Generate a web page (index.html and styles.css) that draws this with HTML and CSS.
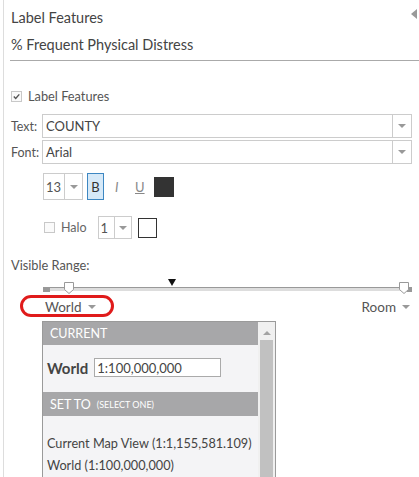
FILE: index.html
```html
<!DOCTYPE html>
<html>
<head>
<meta charset="utf-8">
<link rel="stylesheet" href="styles.css">
</head>
<body>
<div class="wrap">
  <div class="pane">
    <svg class="collapse" width="6" height="10" viewBox="0 0 6 10"><path d="M6 0 L0 5 L6 10 Z" fill="#9a9a9a"/></svg>
    <div class="header">
      <div class="title">Label Features</div>
      <div class="subtitle">% Frequent Physical Distress</div>
    </div>

    <div class="check-row">
      <span class="cbox checked">
        <svg width="9" height="9" viewBox="0 0 9 9"><path d="M1.8 4.6 L3.7 6.5 L7.3 2.4" fill="none" stroke="#555" stroke-width="1.4"/></svg>
      </span>
      <span class="check-label">Label Features</span>
    </div>

    <div class="field-row first">
      <span class="field-label">Text:</span>
      <div class="select">
        <span class="select-value">COUNTY</span>
        <span class="select-btn"><span class="tri"></span></span>
      </div>
    </div>
    <div class="field-row">
      <span class="field-label">Font:</span>
      <div class="select">
        <span class="select-value">Arial</span>
        <span class="select-btn"><span class="tri"></span></span>
      </div>
    </div>

    <div class="style-row">
      <div class="mini-select size">
        <span class="mini-value">13</span>
        <span class="mini-btn"><span class="tri"></span></span>
      </div>
      <span class="btn-b">B</span>
      <span class="btn-i">I</span>
      <span class="btn-u">U</span>
      <span class="swatch dark"></span>
    </div>

    <div class="halo-row">
      <span class="cbox"></span>
      <span class="halo-label">Halo</span>
      <div class="mini-select halo">
        <span class="mini-value">1</span>
        <span class="mini-btn"><span class="tri"></span></span>
      </div>
      <span class="swatch light"></span>
    </div>

    <div class="range-label">Visible Range:</div>

    <div class="slider">
      <div class="track">
        <span class="cap left"></span>
        <span class="cap right"></span>
      </div>
      <svg class="marker" width="8" height="7" viewBox="0 0 8 7"><path d="M0 0 H8 L4 7 Z" fill="#111"/></svg>
      <svg class="handle h-left" width="10" height="12" viewBox="0 0 10 12"><path d="M0.5 0.5 H9.5 V7.5 L5 11.5 L0.5 7.5 Z" fill="#fff" stroke="#999"/></svg>
      <svg class="handle h-right" width="10" height="12" viewBox="0 0 10 12"><path d="M0.5 0.5 H9.5 V7.5 L5 11.5 L0.5 7.5 Z" fill="#fff" stroke="#999"/></svg>
    </div>

    <div class="scale-row">
      <span class="scale">World <span class="tri"></span></span>
      <span class="scale">Room <span class="tri"></span></span>
      <span class="highlight"></span>
    </div>

    <div class="dropdown">
      <div class="dd-main">
        <div class="dd-head">CURRENT</div>
        <div class="dd-current">
          <span class="dd-name">World</span>
          <span class="dd-input">1:100,000,000</span>
        </div>
        <div class="dd-head set">SET TO <small>(SELECT ONE)</small></div>
        <div class="dd-item first">Current Map View (1:1,155,581.109)</div>
        <div class="dd-item">World (1:100,000,000)</div>
      </div>
      <div class="dd-scroll">
        <span class="up"></span>
        <span class="thumb"></span>
      </div>
    </div>
  </div>
</div>
</body>
</html>
```

FILE: styles.css
```css
* { box-sizing: border-box; }
html, body { margin: 0; padding: 0; }
body {
  width: 419px;
  height: 477px;
  overflow: hidden;
  background: #fff;
  font-family: Lato, "Open Sans", sans-serif;
  color: #444;
  font-size: 13px;
}
.wrap { padding-left: 3px; height: 477px; }
.pane {
  position: relative;
  height: 477px;
  border-left: 1px solid #ddd;
  padding-left: 6px;
}
.collapse { position: absolute; right: 2px; top: 9px; }

.header {
  border-bottom: 1px solid #aaa;
  padding: 8px 0 5px 1px;
  font-size: 14.5px;
  color: #444;
}
.title { line-height: 20px; }
.subtitle { line-height: 20px; margin-top: 7px; }

.check-row {
  margin-top: 25px;
  height: 20px;
  display: flex;
  align-items: center;
  padding-left: 1px;
}
.cbox {
  width: 11px;
  height: 11px;
  border: 1px solid #c8c8c8;
  background: #fafafa;
  display: flex;
  align-items: center;
  justify-content: center;
}
.check-label { margin-left: 6px; font-size: 12.8px; color: #555; }

.field-row {
  display: grid;
  grid-template-columns: 32px 1fr;
  align-items: center;
  margin-top: 2px;
  margin-right: 7px;
  height: 24px;
}
.field-row.first { margin-top: 8px; }
.field-label { padding-left: 1px; font-size: 12.5px; color: #555; }
.select {
  height: 24px;
  border: 1px solid #ccc;
  display: flex;
  align-items: center;
}
.select-value { flex: 1; padding-left: 3px; font-size: 13px; color: #444; }
.select-btn {
  width: 19px;
  height: 100%;
  border-left: 1px solid #ccc;
  display: flex;
  align-items: center;
  justify-content: center;
}
.tri {
  display: inline-block;
  width: 0;
  height: 0;
  border-left: 4px solid transparent;
  border-right: 4px solid transparent;
  border-top: 4px solid #999;
}

.style-row {
  margin-top: 9px;
  margin-left: 33px;
  height: 27px;
  display: flex;
  align-items: center;
}
.mini-select {
  display: flex;
  align-items: stretch;
  border: 1px solid #ccc;
}
.mini-select.size { width: 40px; height: 27px; }
.mini-value {
  display: flex;
  align-items: center;
  padding-left: 2px;
  font-size: 13px;
  color: #555;
}
.mini-select.size .mini-value { width: 20px; }
.mini-btn {
  flex: 1;
  border-left: 1px solid #ccc;
  display: flex;
  align-items: center;
  justify-content: center;
}
.btn-b {
  margin-left: 4px;
  width: 17px;
  height: 27px;
  border: 1px solid #3d87c2;
  background: #d6e9f8;
  display: flex;
  align-items: center;
  justify-content: center;
  font-size: 13px;
  color: #333;
}
.btn-i {
  margin-left: 11px;
  font-style: italic;
  color: #888;
  font-size: 13px;
  width: 10px;
}
.btn-u {
  margin-left: 10px;
  text-decoration: underline;
  color: #888;
  font-size: 13px;
  width: 10px;
}
.swatch { display: block; }
.swatch.dark {
  margin-left: 9px;
  width: 20px;
  height: 20px;
  background: #333;
}

.halo-row {
  margin-top: 16px;
  margin-left: 34px;
  height: 23px;
  display: flex;
  align-items: center;
}
.halo-label { margin-left: 6px; font-size: 12.5px; color: #666; }
.mini-select.halo { margin-left: 11px; width: 34px; height: 23px; }
.mini-select.halo .mini-value { width: 15px; }
.swatch.light {
  margin-left: 6px;
  width: 19px;
  height: 20px;
  border: 1px solid #333;
  background: #fff;
}

.range-label {
  margin-top: 17px;
  line-height: 18px;
  padding-left: 1px;
  font-size: 12.8px;
  color: #555;
}

.slider {
  position: relative;
  margin-top: 3px;
  height: 20px;
}
.track {
  position: relative;
  top: 10px;
  margin-left: 33px;
  margin-right: 7px;
  height: 4px;
  border-top: 1px solid #999;
  background: #ddd;
}
.cap {
  position: absolute;
  top: -1px;
  height: 5px;
  background: #999;
}
.cap.left { left: 0; width: 7px; }
.cap.right { right: 0; width: 5px; }
.marker { position: absolute; left: 158px; top: 2px; }
.handle { position: absolute; top: 5px; }
.h-left { left: 54px; }
.h-right { left: 389px; }

.scale-row {
  position: relative;
  height: 20px;
  margin-right: 9px;
  padding-left: 35px;
  display: flex;
  align-items: center;
  justify-content: space-between;
}
.scale { font-size: 13.5px; color: #555; display: flex; align-items: center; }
.scale .tri { margin-left: 6px; }
.highlight {
  position: absolute;
  left: 10px;
  top: -2px;
  width: 94px;
  height: 22px;
  border: 3px solid #e01b1b;
  border-radius: 11px;
}

.dropdown {
  margin-top: 4px;
  margin-left: 32px;
  width: 234px;
  height: 160px;
  border: 1px solid #9a9a9a;
  border-bottom: none;
  background: #f4f4f6;
  display: flex;
}
.dd-main { width: 215px; }
.dd-head {
  height: 23px;
  background: #a7a7a9;
  color: #fff;
  font-size: 12.5px;
  padding-left: 7px;
  display: flex;
  align-items: center;
}
.dd-head.set { margin-top: 15px; height: 24px; }
.dd-head small { font-size: 9px; margin-left: 6px; }
.dd-current {
  margin-top: 13px;
  height: 19px;
  display: flex;
  align-items: center;
  padding-left: 4px;
}
.dd-name { font-weight: bold; font-size: 15px; color: #444; }
.dd-input {
  margin-left: 6px;
  width: 127px;
  height: 19px;
  border: 1px solid #aaa;
  background: #fff;
  font-size: 13px;
  color: #444;
  padding-left: 2px;
  display: flex;
  align-items: center;
}
.dd-item {
  padding-left: 4px;
  line-height: 22px;
  font-size: 12.7px;
  color: #444;
  white-space: nowrap;
}
.dd-item.first { margin-top: 16px; }
.dd-scroll {
  position: relative;
  width: 17px;
  background: #f0f0f0;
}
.dd-scroll .up {
  position: absolute;
  left: 5px;
  top: 9px;
  border-left: 4px solid transparent;
  border-right: 4px solid transparent;
  border-bottom: 4px solid #a3a3a3;
}
.dd-scroll .thumb {
  position: absolute;
  left: 2px;
  right: 2px;
  top: 18px;
  bottom: 0;
  background: #c1c1c1;
}
```
